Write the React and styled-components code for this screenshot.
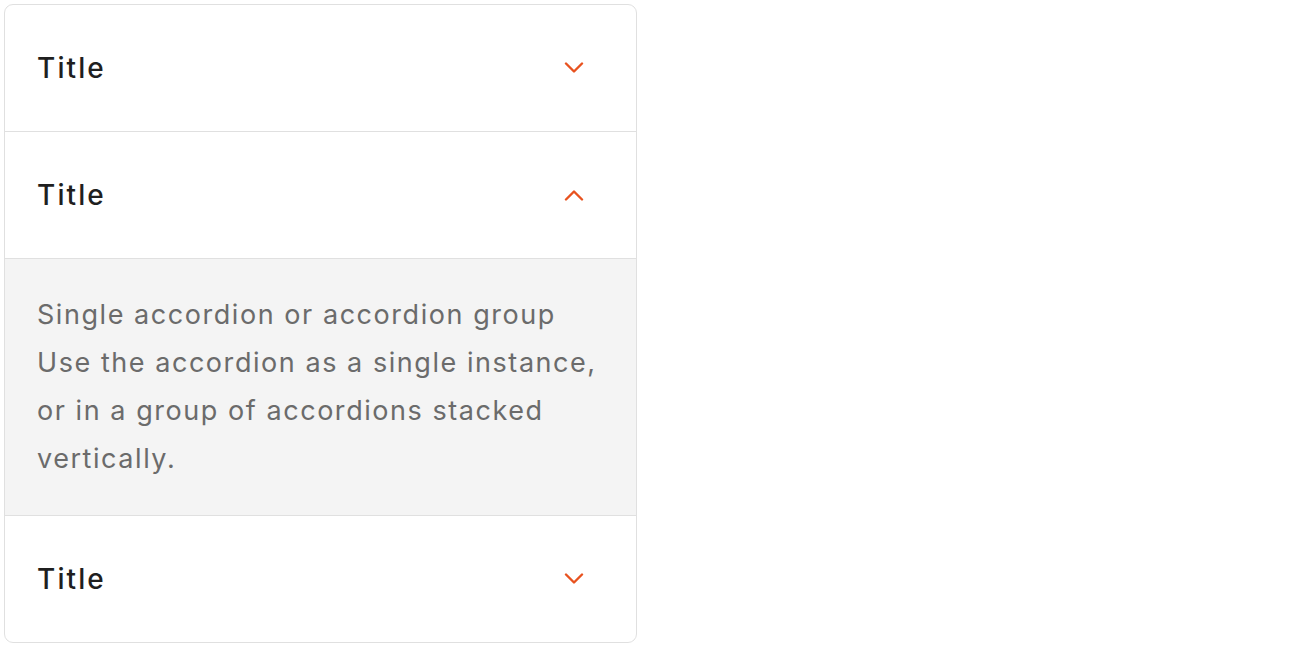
import React, { useState } from "react";
import styled, { createGlobalStyle } from "styled-components";

const GlobalStyle = createGlobalStyle`
  body {
    margin: 0;
    padding: 4px;
    background: #ffffff;
    font-family: Inter, "Noto Sans", sans-serif;
  }
`;

const Card = styled.div`
  width: 633px;
  box-sizing: border-box;
  border: 1px solid #e0e0e0;
  border-radius: 9px;
  overflow: hidden;
  background: #ffffff;
`;

const Section = styled.div`
  & + & {
    border-top: 1px solid #e0e0e0;
  }
`;

const Header = styled.button`
  display: flex;
  align-items: center;
  justify-content: space-between;
  width: 100%;
  height: 126px;
  padding: 0 52px 0 32px;
  box-sizing: border-box;
  border: none;
  background: transparent;
  cursor: pointer;
  font-family: inherit;
  text-align: left;
`;

const Title = styled.span`
  font-size: 28px;
  font-weight: 500;
  color: #1f1f1f;
  letter-spacing: 2.1px;
`;

const Body = styled.div`
  border-top: 1px solid #e0e0e0;
  background: #f4f4f4;
  padding: 32px 32px 32px;
  font-size: 27px;
  line-height: 48px;
  color: #6b6b6b;
  letter-spacing: 1.55px;
`;

const Chevron = ({ open }) => (
  <svg width="20" height="12" viewBox="0 0 20 12" fill="none">
    <path
      d={open ? "M2 10.5 L10 2.5 L18 10.5" : "M2 1.5 L10 9.5 L18 1.5"}
      stroke="#e8521f"
      strokeWidth="2.4"
      strokeLinecap="round"
      strokeLinejoin="round"
    />
  </svg>
);

const items = [
  { title: "Title" },
  {
    title: "Title",
    heading: "Single accordion or accordion group",
    text: "Use the accordion as a single instance, or in a group of accordions stacked vertically.",
  },
  { title: "Title" },
];

export default function App() {
  const [open, setOpen] = useState(1);
  return (
    <>
      <GlobalStyle />
      <Card>
        {items.map((item, i) => (
          <Section key={i}>
            <Header onClick={() => setOpen(open === i ? -1 : i)}>
              <Title>{item.title}</Title>
              <Chevron open={open === i} />
            </Header>
            {open === i && item.heading && (
              <Body>
                {item.heading}
                <br />
                {item.text}
              </Body>
            )}
          </Section>
        ))}
      </Card>
    </>
  );
}
